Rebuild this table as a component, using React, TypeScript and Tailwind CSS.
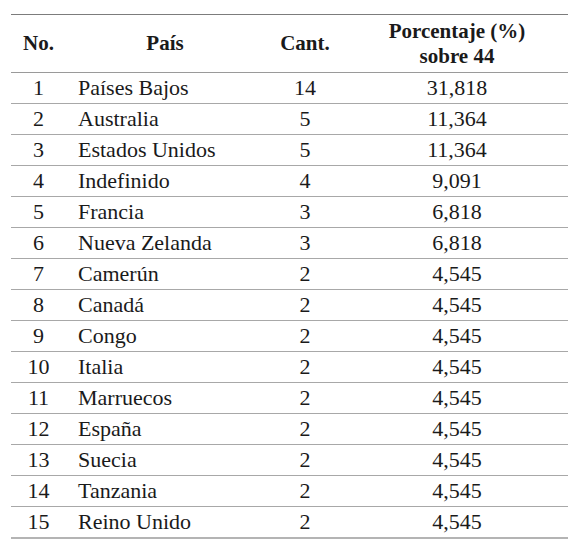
import React from "react";

type Row = {
  no: number;
  pais: string;
  cant: number;
  pct: string;
};

const rows: Row[] = [
  { no: 1, pais: "Países Bajos", cant: 14, pct: "31,818" },
  { no: 2, pais: "Australia", cant: 5, pct: "11,364" },
  { no: 3, pais: "Estados Unidos", cant: 5, pct: "11,364" },
  { no: 4, pais: "Indefinido", cant: 4, pct: "9,091" },
  { no: 5, pais: "Francia", cant: 3, pct: "6,818" },
  { no: 6, pais: "Nueva Zelanda", cant: 3, pct: "6,818" },
  { no: 7, pais: "Camerún", cant: 2, pct: "4,545" },
  { no: 8, pais: "Canadá", cant: 2, pct: "4,545" },
  { no: 9, pais: "Congo", cant: 2, pct: "4,545" },
  { no: 10, pais: "Italia", cant: 2, pct: "4,545" },
  { no: 11, pais: "Marruecos", cant: 2, pct: "4,545" },
  { no: 12, pais: "España", cant: 2, pct: "4,545" },
  { no: 13, pais: "Suecia", cant: 2, pct: "4,545" },
  { no: 14, pais: "Tanzania", cant: 2, pct: "4,545" },
  { no: 15, pais: "Reino Unido", cant: 2, pct: "4,545" },
];

const App: React.FC = () => {
  return (
    <div className="w-[577px] h-[549px] bg-white pt-[14px] pl-[11px] text-[#1a1a1a]">
      <table className="w-[557px] border-collapse table-fixed font-['Liberation_Serif']">
        <colgroup>
          <col className="w-[55px]" />
          <col className="w-[198px]" />
          <col className="w-[82px]" />
          <col className="w-[222px]" />
        </colgroup>
        <thead>
          <tr className="h-[58px] border-t border-b border-t-[#7c7c7c] border-b-[#9a9a9a] text-[21px] font-bold leading-[25px]">
            <th className="text-center">No.</th>
            <th className="text-center">País</th>
            <th className="text-center">Cant.</th>
            <th className="text-center">
              Porcentaje (%)
              <br />
              sobre 44
            </th>
          </tr>
        </thead>
        <tbody>
          {rows.map((r, i) => (
            <tr
              key={r.no}
              className={
                "h-[31px] text-[22px] leading-none " +
                (i === rows.length - 1
                  ? "border-b-2 border-b-[#b4b4b4]"
                  : "border-b border-b-[#a8a8a8]")
              }
            >
              <td className="text-center">{r.no}</td>
              <td className="pl-[12px]">{r.pais}</td>
              <td className="text-center">{r.cant}</td>
              <td className="text-center">{r.pct}</td>
            </tr>
          ))}
        </tbody>
      </table>
    </div>
  );
};

export default App;
